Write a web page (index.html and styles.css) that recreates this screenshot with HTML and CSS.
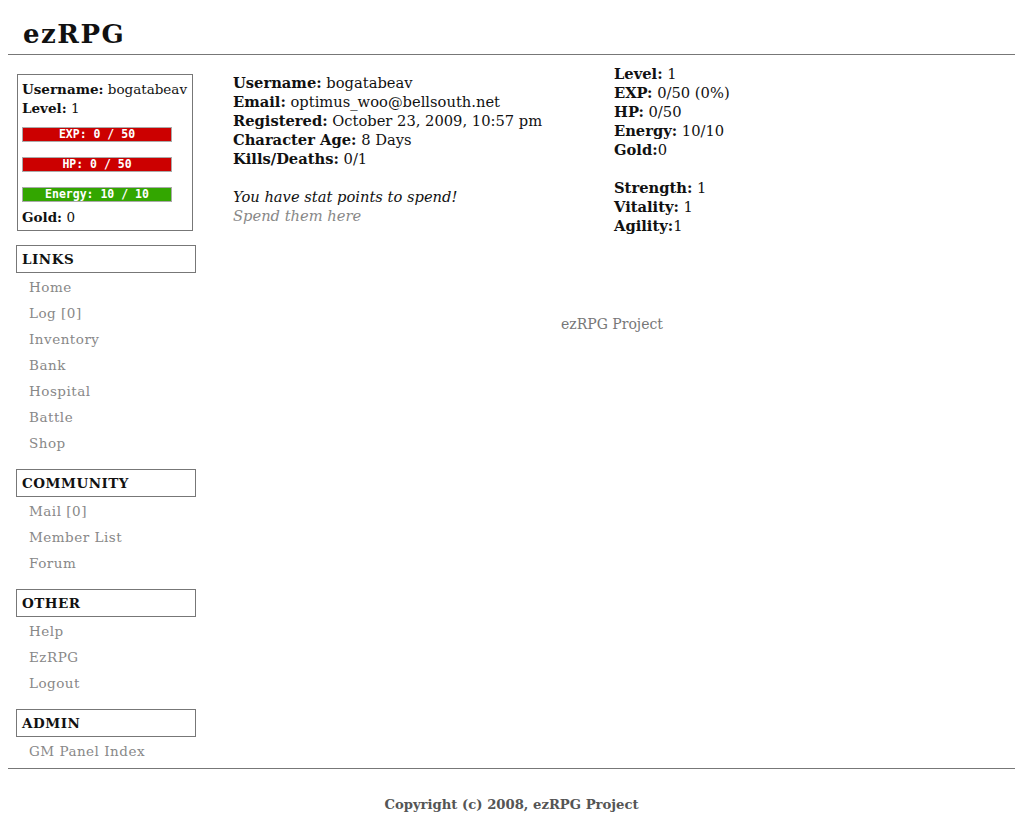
FILE: index.html
```html
<!DOCTYPE html>
<html>
<head>
<meta charset="utf-8">
<title>ezRPG</title>
<link rel="stylesheet" href="styles.css">
</head>
<body>
<div class="header"><h1 class="logo">ezRPG</h1></div>
<div class="wrapper">
  <div class="sidebar">
    <div class="statbox">
      <div><b>Username:</b> bogatabeav</div>
      <div><b>Level:</b> 1</div>
      <div class="bar red">EXP: 0 / 50</div>
      <div class="bar red">HP: 0 / 50</div>
      <div class="bar green">Energy: 10 / 10</div>
      <div><b>Gold:</b> 0</div>
    </div>
    <div class="navhead">LINKS</div>
    <ul class="nav">
      <li>Home</li><li>Log [0]</li><li>Inventory</li><li>Bank</li><li>Hospital</li><li>Battle</li><li>Shop</li>
    </ul>
    <div class="navhead">COMMUNITY</div>
    <ul class="nav">
      <li>Mail [0]</li><li>Member List</li><li>Forum</li>
    </ul>
    <div class="navhead">OTHER</div>
    <ul class="nav">
      <li>Help</li><li>EzRPG</li><li>Logout</li>
    </ul>
    <div class="navhead">ADMIN</div>
    <ul class="nav">
      <li>GM Panel Index</li>
    </ul>
  </div>
  <div class="main">
    <div class="cols">
      <div class="col-left">
        <div><b>Username:</b> bogatabeav</div>
        <div><b>Email:</b> optimus_woo@bellsouth.net</div>
        <div><b>Registered:</b> October 23, 2009, 10:57 pm</div>
        <div><b>Character Age:</b> 8 Days</div>
        <div><b>Kills/Deaths:</b> 0/1</div>
        <p class="notice"><i>You have stat points to spend!</i><br><span class="spend">Spend them here</span></p>
      </div>
      <div class="col-right">
        <div><b>Level:</b> 1</div>
        <div><b>EXP:</b> 0/50 (0%)</div>
        <div><b>HP:</b> 0/50</div>
        <div><b>Energy:</b> 10/10</div>
        <div><b>Gold:</b>0</div>
        <div class="gap"><b>Strength:</b> 1</div>
        <div><b>Vitality:</b> 1</div>
        <div><b>Agility:</b>1</div>
      </div>
    </div>
    <div class="project">ezRPG Project</div>
  </div>
</div>
<div class="footer">Copyright (c) 2008, ezRPG Project</div>
</body>
</html>
```
FILE: styles.css
```css
body {
  margin: 0 17px 0 8px;
  font-family: "DejaVu Serif", "Liberation Serif", serif;
  font-size: 13.5px;
  color: #111;
  background: #fff;
}
b { font-weight: bold; }
.header {
  height: 55px;
  border-bottom: 1px solid #777;
  box-sizing: border-box;
  display: flex;
  align-items: flex-end;
  padding-left: 15px;
}
.logo {
  margin: 0 0 5px 0;
  font-size: 26px;
  letter-spacing: 1.5px;
  font-weight: bold;
  font-family: "DejaVu Serif", serif;
}
.wrapper {
  display: flex;
  padding-top: 19px;
}
.sidebar {
  width: 180px;
  margin-left: 8px;
  flex: none;
}
.statbox {
  margin-left: 1px;
  width: 176px;
  box-sizing: border-box;
  border: 1px solid #777;
  padding: 5px 4px 3px 4px;
  line-height: 19px;
}
.bar {
  width: 150px;
  box-sizing: border-box;
  height: 15px;
  border: 1px solid #aaa;
  color: #fff;
  font-family: "DejaVu Sans Mono", monospace;
  font-weight: bold;
  font-size: 11.5px;
  line-height: 13px;
  text-align: center;
  margin: 9px 0 15px 0;
}
.bar + .bar { margin-top: 0; }
.bar.red { background: #c00; }
.bar.green { background: #33a600; margin-bottom: 6px; }
.navhead {
  margin-top: 13px;
  width: 180px;
  height: 28px;
  box-sizing: border-box;
  border: 1px solid #777;
  font-weight: bold;
  padding-left: 5px;
  line-height: 26px;
  letter-spacing: 0.5px;
}
.statbox + .navhead { margin-top: 14px; }
.nav {
  list-style: none;
  margin: 0;
  padding: 1px 0 0 13px;
}
.nav li {
  color: #888;
  line-height: 26px;
  letter-spacing: 0.5px;
}
.main {
  flex: 1;
  margin-left: 37px;
}
.cols {
  display: flex;
}
.col-left {
  width: 381px;
  line-height: 19px;
  font-size: 14.7px;
  margin-top: -1px;
}
.col-right {
  line-height: 19px;
  margin-top: -10px;
  font-size: 14.7px;
}
.gap { margin-top: 19px; }
.notice {
  margin: 19px 0 0 0;
}
.spend { color: #888; font-style: italic; }
.project {
  text-align: center;
  color: #777;
  font-size: 14px;
  margin-top: 81px;
  padding-right: 24px;
}
.footer {
  margin-top: 4px;
  border-top: 1px solid #777;
  text-align: center;
  color: #555;
  font-weight: bold;
  font-size: 13.2px;
  padding-top: 28px;
}
```
